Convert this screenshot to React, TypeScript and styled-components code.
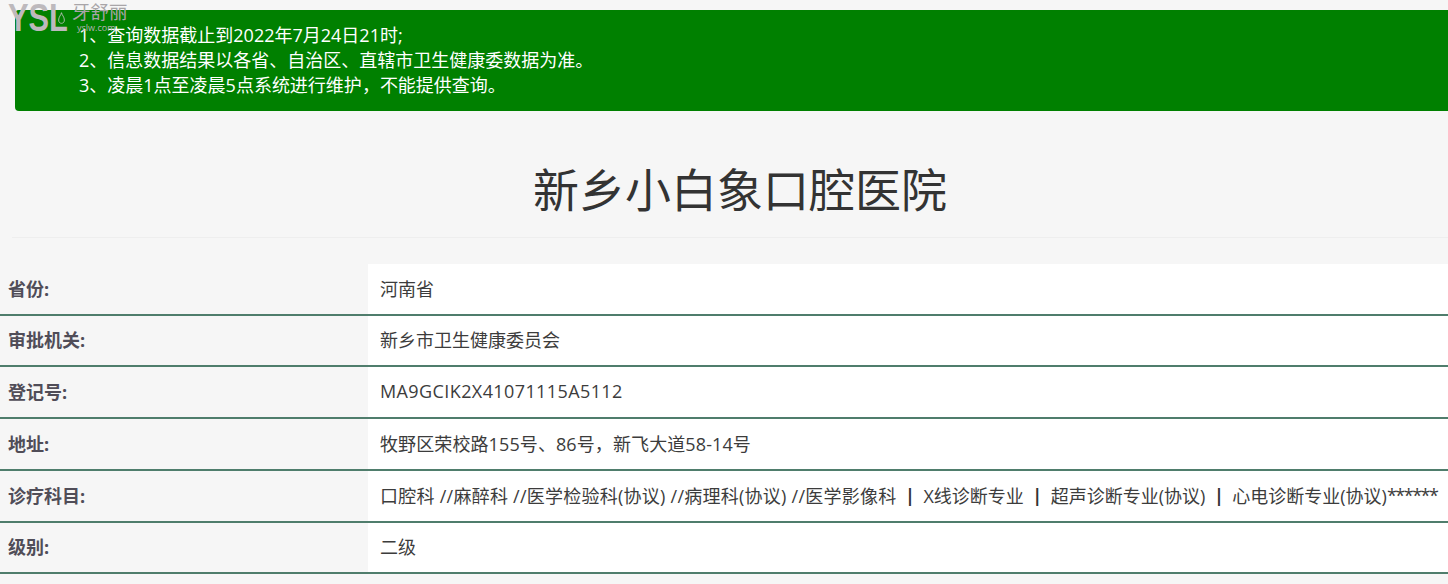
import { Fragment } from 'react';
import styled, { createGlobalStyle } from 'styled-components';

const GlobalStyle = createGlobalStyle`
  html, body {
    margin: 0;
    padding: 0;
    background: #f6f6f6;
    overflow: hidden;
  }
  body {
    font-family: "Open Sans", "Noto Sans CJK SC", sans-serif;
    color: #333;
  }
`;

const Page = styled.div`
  position: relative;
  width: 1448px;
  height: 584px;
  padding-top: 10px;
  box-sizing: border-box;
  overflow: hidden;
`;

/* watermark sits over the green notice */
const Watermark = styled.div`
  position: absolute;
  top: 0;
  left: 8px;
  display: flex;
  align-items: flex-start;
  color: #bdb9bd;
`;

const LogoText = styled.span`
  width: 49px;
  margin-top: 1px;
  font-family: "Liberation Sans", sans-serif;
  font-size: 39px;
  line-height: 34px;
  font-weight: 700;
  transform: scaleX(0.79);
  transform-origin: left center;
  white-space: nowrap;
`;

const ToothIcon = styled.svg`
  width: 9px;
  height: 14px;
  margin-top: 11px;
  flex: none;
`;

const Brand = styled.div`
  display: flex;
  flex-direction: column;
  margin-left: 6px;
`;

const BrandName = styled.span`
  font-size: 18.5px;
  line-height: 23px;
  color: #a8a5a8;
  white-space: nowrap;
`;

const BrandUrl = styled.span`
  padding-left: 5px;
  font-size: 9px;
  line-height: 10px;
  color: #b5b2b5;
`;

const Notice = styled.div`
  margin-left: 15px;
  height: 101px;
  box-sizing: border-box;
  padding: 13px 0 0 64px;
  background: #008000;
  border-radius: 4px 0 0 4px;
  color: #fff;
  font-size: 18px;
  line-height: 25px;
`;

const NoticeLine = styled.div`
  white-space: nowrap;
`;

const Title = styled.h1`
  margin: 0 0 0 12px;
  height: 127px;
  box-sizing: border-box;
  padding: 47px 0 0 20px;
  border-bottom: 1px solid #eeeeee;
  font-size: 46px;
  line-height: 62px;
  font-weight: 400;
  text-align: center;
  color: #333;
`;

const Table = styled.div`
  margin-top: 26px;
  display: grid;
  grid-template-columns: 368px 1fr;
`;

const Label = styled.div<{ $height: number }>`
  height: ${p => p.$height}px;
  box-sizing: border-box;
  border-bottom: 2px solid #4f7d6c;
  padding: 0 0 3px 8px;
  display: flex;
  align-items: center;
  font-size: 18px;
  font-weight: 700;
  color: #504d58;
`;

const Value = styled.div<{ $height: number; $tracking?: number }>`
  height: ${p => p.$height}px;
  box-sizing: border-box;
  border-bottom: 2px solid #4f7d6c;
  padding: 0 0 3px 12px;
  display: flex;
  align-items: center;
  background: #fff;
  font-size: 18px;
  letter-spacing: ${p => p.$tracking ?? 0}px;
  color: #3c3c3c;
  white-space: pre;
`;

const Departments = styled.span`
  letter-spacing: 0.25px;
`;

const Divider = styled.span`
  margin: 0 8.5px;
  font-weight: 700;
  color: #333;
`;

const Stars = styled.span`
  letter-spacing: -1.5px;
`;

const rows = [
  { label: '省份:', value: '河南省', height: 52 },
  { label: '审批机关:', value: '新乡市卫生健康委员会', height: 51 },
  { label: '登记号:', value: 'MA9GCIK2X41071115A5112', height: 52, tracking: 0.4 },
  { label: '地址:', value: '牧野区荣校路155号、86号\uFF0C新飞大道58-14号', height: 52, tracking: 0.1 },
  {
    label: '诊疗科目:',
    value: (
      <>
        <Departments>口腔科 //麻醉科 //医学检验科(协议) //病理科(协议) //医学影像科</Departments>
        <Divider>|</Divider>
        <span>X线诊断专业</span>
        <Divider>|</Divider>
        <span>超声诊断专业(协议)</span>
        <Divider>|</Divider>
        <span>心电诊断专业(协议)</span>
        <Stars>******</Stars>
      </>
    ),
    height: 52,
  },
  { label: '级别:', value: '二级', height: 51 },
];

const App = () => {
  return (
    <>
      <GlobalStyle />
      <Page>
        <Notice>
          <NoticeLine>1、查询数据截止到2022年7月24日21时;</NoticeLine>
          <NoticeLine>2、信息数据结果以各省、自治区、直辖市卫生健康委数据为准。</NoticeLine>
          <NoticeLine>3、凌晨1点至凌晨5点系统进行维护{'\uFF0C'}不能提供查询。</NoticeLine>
        </Notice>
        <Title>新乡小白象口腔医院</Title>
        <Table>
          {rows.map(row => (
            <Fragment key={row.label}>
              <Label $height={row.height}>{row.label}</Label>
              <Value $height={row.height} $tracking={row.tracking}>{row.value}</Value>
            </Fragment>
          ))}
        </Table>
        <Watermark>
          <LogoText>YSL</LogoText>
          <ToothIcon viewBox="0 0 11 15" fill="none" stroke="#c9c6c9" strokeWidth="1">
            <path d="M5.5 1 C5 4 2 6 2 10 C2 13 4 14 5.5 14 C7 14 9 13 9 10 C9 6 6 4 5.5 1 Z" />
          </ToothIcon>
          <Brand>
            <BrandName>牙舒丽</BrandName>
            <BrandUrl>yslw.com</BrandUrl>
          </Brand>
        </Watermark>
      </Page>
    </>
  );
};

export default App;
